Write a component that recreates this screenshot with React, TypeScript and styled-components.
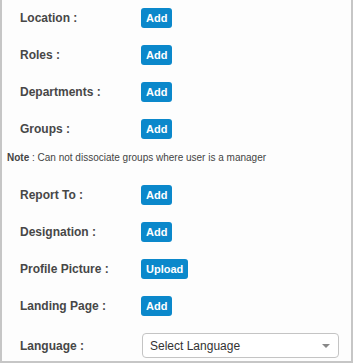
import React from "react";
import styled, { createGlobalStyle } from "styled-components";

const GlobalStyle = createGlobalStyle`
  html, body {
    margin: 0;
    padding: 0;
    background: #ffffff;
  }
  body {
    font-family: "Liberation Sans", Arial, sans-serif;
  }
`;

const Panel = styled.div`
  box-sizing: border-box;
  width: 353px;
  height: 363px;
  background: #fdfdfd;
  border: 2px solid #c6c6c6;
  border-top: none;
  padding-top: 8px;
  overflow: hidden;
`;

const Row = styled.div<{ $gap?: number }>`
  display: grid;
  grid-template-columns: 121px 1fr;
  align-items: center;
  height: 20px;
  padding-left: 18px;
  margin-bottom: ${(p) => (p.$gap ?? 17)}px;
`;

const Label = styled.span`
  font-size: 12px;
  font-weight: bold;
  color: #474747;
`;

const Button = styled.button`
  justify-self: start;
  height: 20px;
  padding: 0 5px;
  border: none;
  border-radius: 3px;
  background: #0b88cb;
  color: #ffffff;
  font-family: "Liberation Sans", Arial, sans-serif;
  font-size: 11px;
  font-weight: bold;
  cursor: pointer;
`;

const Note = styled.div`
  padding-left: 5px;
  height: 12px;
  line-height: 12px;
  font-size: 10px;
  color: #444444;
  margin-bottom: 21px;

  b {
    font-weight: bold;
  }
`;

const SelectBox = styled.div`
  box-sizing: border-box;
  display: flex;
  align-items: center;
  justify-content: space-between;
  width: 197px;
  height: 25px;
  margin-left: 1px;
  padding: 0 8px 0 7px;
  border: 1px solid #c4c4c4;
  border-radius: 4px;
  background: #ffffff;
  font-size: 12px;
  color: #333333;
`;

const Caret = styled.span`
  width: 0;
  height: 0;
  border-left: 4px solid transparent;
  border-right: 4px solid transparent;
  border-top: 4px solid #888888;
`;

const LangRow = styled(Row)`
  height: 25px;
`;

const App: React.FC = () => {
  const top = ["Location :", "Roles :", "Departments :"];
  return (
    <>
      <GlobalStyle />
      <Panel>
        {top.map((l) => (
          <Row key={l}>
            <Label>{l}</Label>
            <Button>Add</Button>
          </Row>
        ))}
        <Row $gap={13}>
          <Label>Groups :</Label>
          <Button>Add</Button>
        </Row>
        <Note>
          <b>Note</b> : Can not dissociate groups where user is a manager
        </Note>
        <Row>
          <Label>Report To :</Label>
          <Button>Add</Button>
        </Row>
        <Row>
          <Label>Designation :</Label>
          <Button>Add</Button>
        </Row>
        <Row>
          <Label>Profile Picture :</Label>
          <Button>Upload</Button>
        </Row>
        <Row>
          <Label>Landing Page :</Label>
          <Button>Add</Button>
        </Row>
        <LangRow>
          <Label>Language :</Label>
          <SelectBox>
            <span>Select Language</span>
            <Caret />
          </SelectBox>
        </LangRow>
      </Panel>
    </>
  );
};

export default App;
